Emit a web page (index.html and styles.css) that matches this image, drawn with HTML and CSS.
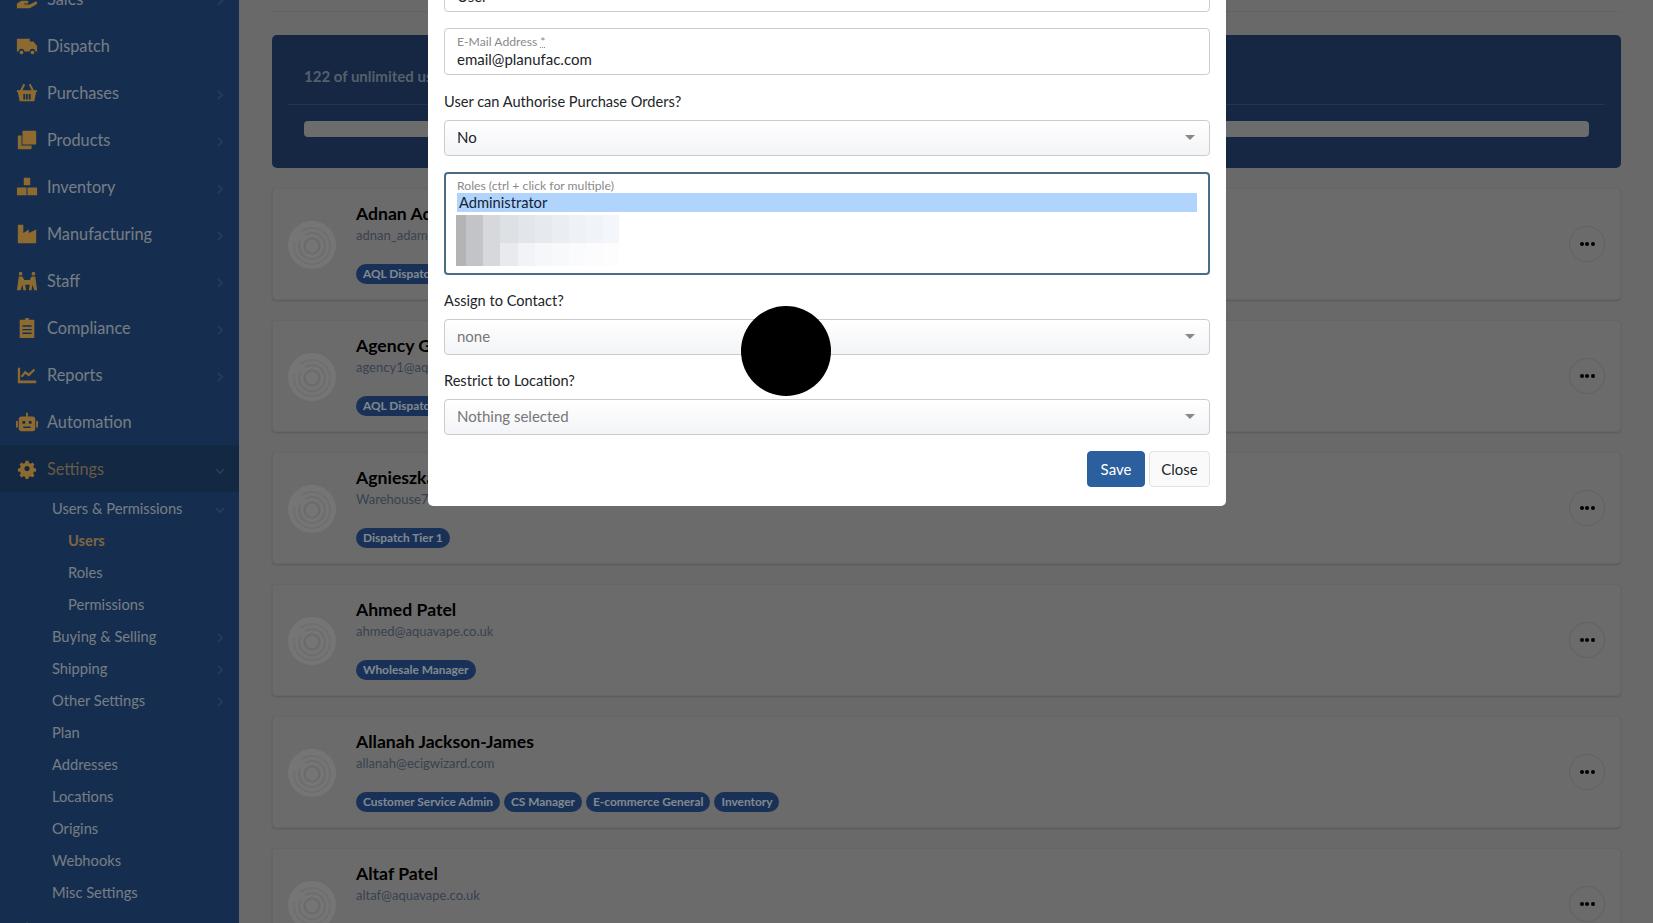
FILE: index.html
```html
<!DOCTYPE html>
<html>
<head>
    <meta name="viewport" content="width=device-width, initial-scale=1">
    <meta charset="UTF-8">
    <title>Users</title>
    <link rel="stylesheet" href="styles.css">
</head>
<body>
    <svg class="defs" width="0" height="0">
        <symbol id="avatar" viewBox="0 0 48 48">
            <circle cx="24" cy="24" r="24" fill="#c4c4c4"/>
            <circle cx="24" cy="25" r="18" fill="none" stroke="#bababa" stroke-width="2" stroke-dasharray="60 12"/>
            <circle cx="24" cy="25" r="13" fill="none" stroke="#b6b6b6" stroke-width="2" stroke-dasharray="46 8"/>
            <circle cx="24" cy="25" r="7.5" fill="none" stroke="#b2b2b2" stroke-width="2"/>
        </symbol>
        <symbol id="chev-right" viewBox="0 0 8 12">
            <path d="M2 2l4 4-4 4" fill="none" stroke="currentColor" stroke-width="1.6"/>
        </symbol>
        <symbol id="chev-down" viewBox="0 0 12 8">
            <path d="M2 2l4 4 4-4" fill="none" stroke="currentColor" stroke-width="1.6"/>
        </symbol>
    </svg>

    <div class="sidebar">
        <div class="nav">
            <div class="navitem">
                <svg class="navicon" viewBox="0 0 24 24"><path d="M1 17l5-3h6c2 0 2 3 0 3h-3v1h6l6-3c2-1 3 1 1 3l-7 4H1z"/></svg>
                <span>Sales</span><svg class="chev"><use href="#chev-right"/></svg>
            </div>
            <div class="navitem">
                <svg class="navicon" viewBox="0 0 24 24"><path d="M1 4h14v3h4l4 5v6h-2a3 3 0 0 0-6 0H9a3 3 0 0 0-6 0H1z"/><circle cx="6" cy="19" r="2"/><circle cx="18" cy="19" r="2"/></svg>
                <span>Dispatch</span>
            </div>
            <div class="navitem">
                <svg class="navicon" viewBox="0 0 24 24"><path d="M8 2l2 1-3 6h10l-3-6 2-1 3.500 7H23v2h-1l-2 10H4L2 11H1V9h3.500zM8 13v6h2v-6zm3 0v6h2v-6zm3 0v6h2v-6z" fill-rule="evenodd"/></svg>
                <span>Purchases</span><svg class="chev"><use href="#chev-right"/></svg>
            </div>
            <div class="navitem">
                <svg class="navicon" viewBox="0 0 24 24"><path d="M8 2h13a1 1 0 0 1 1 1v13a1 1 0 0 1-1 1H8a1 1 0 0 1-1-1V3a1 1 0 0 1 1-1z"/><path d="M3 7h3v11h11v3a1 1 0 0 1-1 1H3a1 1 0 0 1-1-1V8a1 1 0 0 1 1-1z"/></svg>
                <span>Products</span><svg class="chev"><use href="#chev-right"/></svg>
            </div>
            <div class="navitem">
                <svg class="navicon" viewBox="0 0 24 24"><path d="M8.500 2h7v8h-7zM1 12.500h10.500V21H1zM12.500 12.500H23V21H12.500z"/></svg>
                <span>Inventory</span><svg class="chev"><use href="#chev-right"/></svg>
            </div>
            <div class="navitem">
                <svg class="navicon" viewBox="0 0 24 24"><path d="M2 2h6v9l6-4v4l8-4v15H2z"/></svg>
                <span>Manufacturing</span><svg class="chev"><use href="#chev-right"/></svg>
            </div>
            <div class="navitem">
                <svg class="navicon" viewBox="0 0 24 24"><circle cx="5" cy="4" r="2"/><circle cx="19" cy="4" r="2"/><path d="M3 7h4l2 4h6l2-4h4l2 15h-3l-2-6-1 6h-3l1-6H10l1 6H8l-1-6-2 6H1zM8 12h8v3H8z"/></svg>
                <span>Staff</span><svg class="chev"><use href="#chev-right"/></svg>
            </div>
            <div class="navitem">
                <svg class="navicon" viewBox="0 0 24 24"><path d="M10 1h4v2h5a1 1 0 0 1 1 1v18a1 1 0 0 1-1 1H5a1 1 0 0 1-1-1V4a1 1 0 0 1 1-1h5zM7 9v1.500h10V9zm0 4v1.500h10V13zm0 4v1.500h10V17z" fill-rule="evenodd"/></svg>
                <span>Compliance</span><svg class="chev"><use href="#chev-right"/></svg>
            </div>
            <div class="navitem">
                <svg class="navicon" viewBox="0 0 24 24"><path d="M2 4h2.500v14H22v3H2z"/><path d="M6 14l4-5 4 3 6-6" fill="none" stroke="currentColor" stroke-width="2.400"/></svg>
                <span>Reports</span><svg class="chev"><use href="#chev-right"/></svg>
            </div>
            <div class="navitem">
                <svg class="navicon" viewBox="0 0 24 24"><path d="M11 2h2v4h5a3 3 0 0 1 3 3v10a3 3 0 0 1-3 3H6a3 3 0 0 1-3-3V9a3 3 0 0 1 3-3h5zM8 17v1.500h8V17zM7 11v3h3v-3zM14 11v3h3v-3z" fill-rule="evenodd"/><path d="M0 11h2v7H0zM22 11h2v7h-2z"/></svg>
                <span>Automation</span>
            </div>
            <div class="navitem navitem-open">
                <svg class="navicon" viewBox="0 0 24 24"><path d="M10 2h4l.6 3 2.200.9 2.600-1.700 2.800 2.800-1.700 2.600.9 2.200 3 .6v4l-3 .6-.9 2.200 1.700 2.600-2.800 2.800-2.600-1.700-2.200.9-.6 3h-4l-.6-3-2.200-.9-2.600 1.700-2.800-2.800 1.700-2.600-.9-2.200-3-.6v-4l3-.6.9-2.200L1.800 7l2.800-2.800 2.600 1.700 2.200-.9zM12 9a3.500 3.500 0 1 0 0 7 3.500 3.500 0 0 0 0-7z" fill-rule="evenodd" transform="translate(2.400 1.500) scale(.8)"/></svg>
                <span>Settings</span><svg class="chev chev-d"><use href="#chev-down"/></svg>
            </div>
            <div class="subitem">Users &amp; Permissions<svg class="chev chev-d"><use href="#chev-down"/></svg></div>
            <div class="subsub active">Users</div>
            <div class="subsub">Roles</div>
            <div class="subsub">Permissions</div>
            <div class="subitem">Buying &amp; Selling<svg class="chev"><use href="#chev-right"/></svg></div>
            <div class="subitem">Shipping<svg class="chev"><use href="#chev-right"/></svg></div>
            <div class="subitem">Other Settings<svg class="chev"><use href="#chev-right"/></svg></div>
            <div class="subitem">Plan</div>
            <div class="subitem">Addresses</div>
            <div class="subitem">Locations</div>
            <div class="subitem">Origins</div>
            <div class="subitem">Webhooks</div>
            <div class="subitem">Misc Settings</div>
            <div class="navitem">
                <svg class="navicon" viewBox="0 0 24 24"><circle cx="12" cy="12" r="10"/></svg>
            </div>
        </div>
    </div>

    <div class="main">
        <div class="topline"></div>

        <div class="plancard">
            <div class="plantext">122 of unlimited users</div>
            <div class="planrule"></div>
            <div class="planbar"></div>
        </div>

        <div class="usercard">
            <svg class="avatar"><use href="#avatar"/></svg>
            <div class="userinfo">
                <div class="username">Adnan Adam</div>
                <div class="useremail">adnan_adam@aquavape.co.uk</div>
                <div class="badges"><span class="badge">AQL Dispatch</span></div>
            </div>
            <div class="dotsbtn"><i></i><i></i><i></i></div>
        </div>
        <div class="usercard">
            <svg class="avatar"><use href="#avatar"/></svg>
            <div class="userinfo">
                <div class="username">Agency G</div>
                <div class="useremail">agency1@aquavape.co.uk</div>
                <div class="badges"><span class="badge">AQL Dispatch</span></div>
            </div>
            <div class="dotsbtn"><i></i><i></i><i></i></div>
        </div>
        <div class="usercard">
            <svg class="avatar"><use href="#avatar"/></svg>
            <div class="userinfo">
                <div class="username">Agnieszka</div>
                <div class="useremail">Warehouse7@aquavape.co.uk</div>
                <div class="badges"><span class="badge">Dispatch Tier 1</span></div>
            </div>
            <div class="dotsbtn"><i></i><i></i><i></i></div>
        </div>
        <div class="usercard">
            <svg class="avatar"><use href="#avatar"/></svg>
            <div class="userinfo">
                <div class="username">Ahmed Patel</div>
                <div class="useremail">ahmed@aquavape.co.uk</div>
                <div class="badges"><span class="badge">Wholesale Manager</span></div>
            </div>
            <div class="dotsbtn"><i></i><i></i><i></i></div>
        </div>
        <div class="usercard">
            <svg class="avatar"><use href="#avatar"/></svg>
            <div class="userinfo">
                <div class="username">Allanah Jackson-James</div>
                <div class="useremail">allanah@ecigwizard.com</div>
                <div class="badges">
                    <span class="badge">Customer Service Admin</span>
                    <span class="badge">CS Manager</span>
                    <span class="badge">E-commerce General</span>
                    <span class="badge">Inventory</span>
                </div>
            </div>
            <div class="dotsbtn"><i></i><i></i><i></i></div>
        </div>
        <div class="usercard">
            <svg class="avatar"><use href="#avatar"/></svg>
            <div class="userinfo">
                <div class="username">Altaf Patel</div>
                <div class="useremail">altaf@aquavape.co.uk</div>
            </div>
            <div class="dotsbtn"><i></i><i></i><i></i></div>
        </div>
    </div>

    <!-- backdrop + modal go over the page -->
    <div class="backdrop"></div>
    <div class="modal">
        <div class="floatfield field-first">
            <div class="floatlabel">Role</div>
            <div class="floatvalue">User</div>
        </div>
        <div class="floatfield">
            <div class="floatlabel">E-Mail Address <span class="req">*</span></div>
            <div class="floatvalue">email@planufac.com</div>
        </div>

        <label class="fieldlabel">User can Authorise Purchase Orders?</label>
        <div class="selectbox"><span>No</span><i class="caret"></i></div>

        <div class="rolesbox">
            <div class="floatlabel">Roles (ctrl + click for multiple)</div>
            <div class="roleselected">Administrator</div>
            <div class="blurred"></div>
        </div>

        <label class="fieldlabel">Assign to Contact?</label>
        <div class="selectbox muted"><span>none</span><i class="caret"></i></div>

        <label class="fieldlabel">Restrict to Location?</label>
        <div class="selectbox muted"><span>Nothing selected</span><i class="caret"></i></div>

        <div class="modalbtns">
            <button type="button" class="btn btn-save">Save</button>
            <button type="button" class="btn btn-close">Close</button>
        </div>
    </div>
    <div class="clickdot"></div>
</body>
</html>
```

FILE: styles.css
```css
html, body {
    height: 100%;
    margin: 0;
    overflow: hidden;
}
body {
    display: flex;
    background-color: #afafaf;
    color: #000;
    font-family: Lato, "Noto Sans", sans-serif;
    font-size: 15px;
}
.defs {
    position: absolute;
}

/* sidebar */
.sidebar {
    width: 239px;
    flex: none;
    height: 923px;
    overflow: hidden;
    background-color: #234e84;
    color: #c6d0dc;
}
.nav {
    margin-top: -25px;
}
.navitem {
    display: flex;
    align-items: center;
    height: 47px;
    padding-left: 16px;
    font-size: 16.3px;
    position: relative;
}
.navicon {
    width: 22px;
    height: 22px;
    margin-right: 9px;
    fill: #ebb150;
    color: #ebb150;
    flex: none;
}
.navitem-open {
    background-color: #1e4371;
    color: #aa9675;
}
.chev {
    position: absolute;
    right: 15px;
    top: 50%;
    width: 8px;
    height: 12px;
    margin-top: -4px;
    color: #44689a;
}
.chev-d {
    width: 12px;
    height: 8px;
    margin-top: -2px;
    right: 13px;
}
.subitem, .subsub {
    position: relative;
    height: 32px;
    line-height: 32px;
    font-size: 14.7px;
}
.subitem {
    padding-left: 52px;
}
.subsub {
    padding-left: 68px;
}
.subsub.active {
    color: #d0a870;
    font-weight: bold;
}

/* main column */
.main {
    flex: 1;
    min-width: 0;
    padding: 0 32px 0 33px;
}
.topline {
    height: 11px;
    border-bottom: 1px solid #a5a5a5;
    margin-bottom: 23px;
}
.plancard {
    height: 133px;
    box-sizing: border-box;
    padding: 0 16px;
    margin-bottom: 20px;
    border-radius: 5px;
    background-color: #244270;
    overflow: hidden;
}
.plantext {
    height: 69px;
    padding: 32px 0 0 16px;
    box-sizing: border-box;
    font-size: 15px;
    font-weight: bold;
    color: #8f9fb5;
}
.planrule {
    height: 1px;
    background-color: #3b5a88;
}
.planbar {
    height: 16px;
    margin: 16px 16px 0 16px;
    border-radius: 4px;
    background-color: #b4b4b4;
}
.usercard {
    display: flex;
    align-items: center;
    height: 112px;
    box-sizing: border-box;
    padding: 0 15px 0 15px;
    margin-bottom: 20px;
    border: 1px solid #a8a8a8;
    border-radius: 4px;
    background-color: #b3b3b3;
    box-shadow: 0 1px 2px rgba(0, 0, 0, 0.15);
}
.avatar {
    width: 48px;
    height: 48px;
    flex: none;
    margin-right: 20px;
    margin-top: 2px;
}
.userinfo {
    flex: 1;
    align-self: flex-start;
    padding-top: 14px;
}
.username {
    height: 22px;
    line-height: 22px;
    font-size: 17.6px;
    font-weight: bold;
}
.useremail {
    height: 20px;
    line-height: 20px;
    font-size: 13px;
    color: #5f6d85;
}
.badges {
    display: flex;
    gap: 4px;
    margin-top: 19px;
}
.badge {
    height: 20px;
    line-height: 20px;
    padding: 0 7px;
    border-radius: 10px;
    background-color: #2a5290;
    color: #d8e2ef;
    font-size: 11.9px;
    font-weight: bold;
}
.dotsbtn {
    display: flex;
    align-items: center;
    justify-content: center;
    gap: 1.500px;
    width: 36px;
    height: 36px;
    box-sizing: border-box;
    margin-top: -1px;
    border: 1px solid #a0a0a0;
    border-radius: 50%;
}
.dotsbtn i {
    width: 4px;
    height: 4px;
    border-radius: 50%;
    background-color: #000;
}

/* modal */
.backdrop {
    position: fixed;
    inset: 0;
    background-color: rgba(0, 0, 0, 0.4);
}
.modal {
    position: fixed;
    left: 428px;
    bottom: 417px;
    width: 798px;
    box-sizing: border-box;
    padding: 0 16px 19px;
    border-radius: 0 0 5px 5px;
    background-color: #fff;
}
.floatfield {
    height: 47px;
    box-sizing: border-box;
    padding: 5px 12px 0;
    margin-bottom: 17px;
    border: 1px solid #ccc;
    border-radius: 4px;
}
.field-first {
    margin-bottom: 16px;
}
.floatlabel {
    height: 15px;
    line-height: 15px;
    font-size: 12.2px;
    color: #8a8a8a;
}
.req {
    text-decoration: underline dotted;
}
.floatvalue {
    height: 20px;
    line-height: 20px;
    font-size: 15px;
    color: #212529;
}
.fieldlabel {
    display: block;
    height: 20px;
    line-height: 20px;
    margin-bottom: 8px;
    font-size: 14.6px;
    color: #212529;
}
.selectbox {
    display: flex;
    align-items: center;
    justify-content: space-between;
    height: 36px;
    box-sizing: border-box;
    padding: 0 14px 2px 12px;
    margin-bottom: 16px;
    border: 1px solid #ccc;
    border-radius: 4px;
    background: linear-gradient(#fff, #f3f4f7);
    font-size: 15px;
    color: #212529;
}
.selectbox.muted {
    color: #777;
}
.caret {
    width: 0;
    height: 0;
    border-left: 5px solid transparent;
    border-right: 5px solid transparent;
    border-top: 5px solid #888;
}
.rolesbox {
    height: 103px;
    box-sizing: border-box;
    padding: 4px 11px 0 11px;
    margin-bottom: 16px;
    border: 2px solid #4a6d85;
    border-radius: 4px;
    overflow: hidden;
}
.roleselected {
    height: 19px;
    line-height: 19px;
    padding-left: 2px;
    background-color: #b0d4fb;
    font-size: 14.7px;
    color: #10233a;
}
.blurred {
    width: 163px;
    height: 51px;
    margin: 3px 0 0 -1px;
    background:
        linear-gradient(90deg, #b2b4b6 10px, #c2c4c7 10px 27px, #d6d8db 27px 44px, #e8eaed 44px 62px, #f1f3f6 62px 79px, #f5f7f9 79px 96px, #f8f9fb 96px 113px, #fafbfd 113px 130px, #fcfcfe 130px 147px, #fdfdfe 147px) 0 28px / 100% 23px no-repeat,
        linear-gradient(90deg, #b2b4b6 10px, #c2c4c7 10px 27px, #d6d8db 27px 44px, #dde0e4 44px 62px, #e2e5ea 62px 79px, #e6e9ee 79px 96px, #eaedf2 96px 113px, #eef1f6 113px 130px, #f0f3f8 130px 147px, #f3f6fa 147px) 0 0 / 100% 28px no-repeat;
}
.modalbtns {
    display: flex;
    justify-content: flex-end;
    gap: 4px;
    margin-top: 16px;
}
.btn {
    height: 36px;
    padding: 0;
    border-radius: 4px;
    font-family: inherit;
    font-size: 15px;
}
.btn-save {
    width: 58px;
    border: 1px solid #2b5f9e;
    background-color: #2b5f9e;
    color: #fff;
}
.btn-close {
    width: 61px;
    border: 1px solid #e2e2e2;
    background-color: #fafafa;
    color: #212529;
}
.clickdot {
    position: fixed;
    left: 741px;
    top: 306px;
    width: 90px;
    height: 90px;
    border-radius: 50%;
    background-color: #000;
}
```
